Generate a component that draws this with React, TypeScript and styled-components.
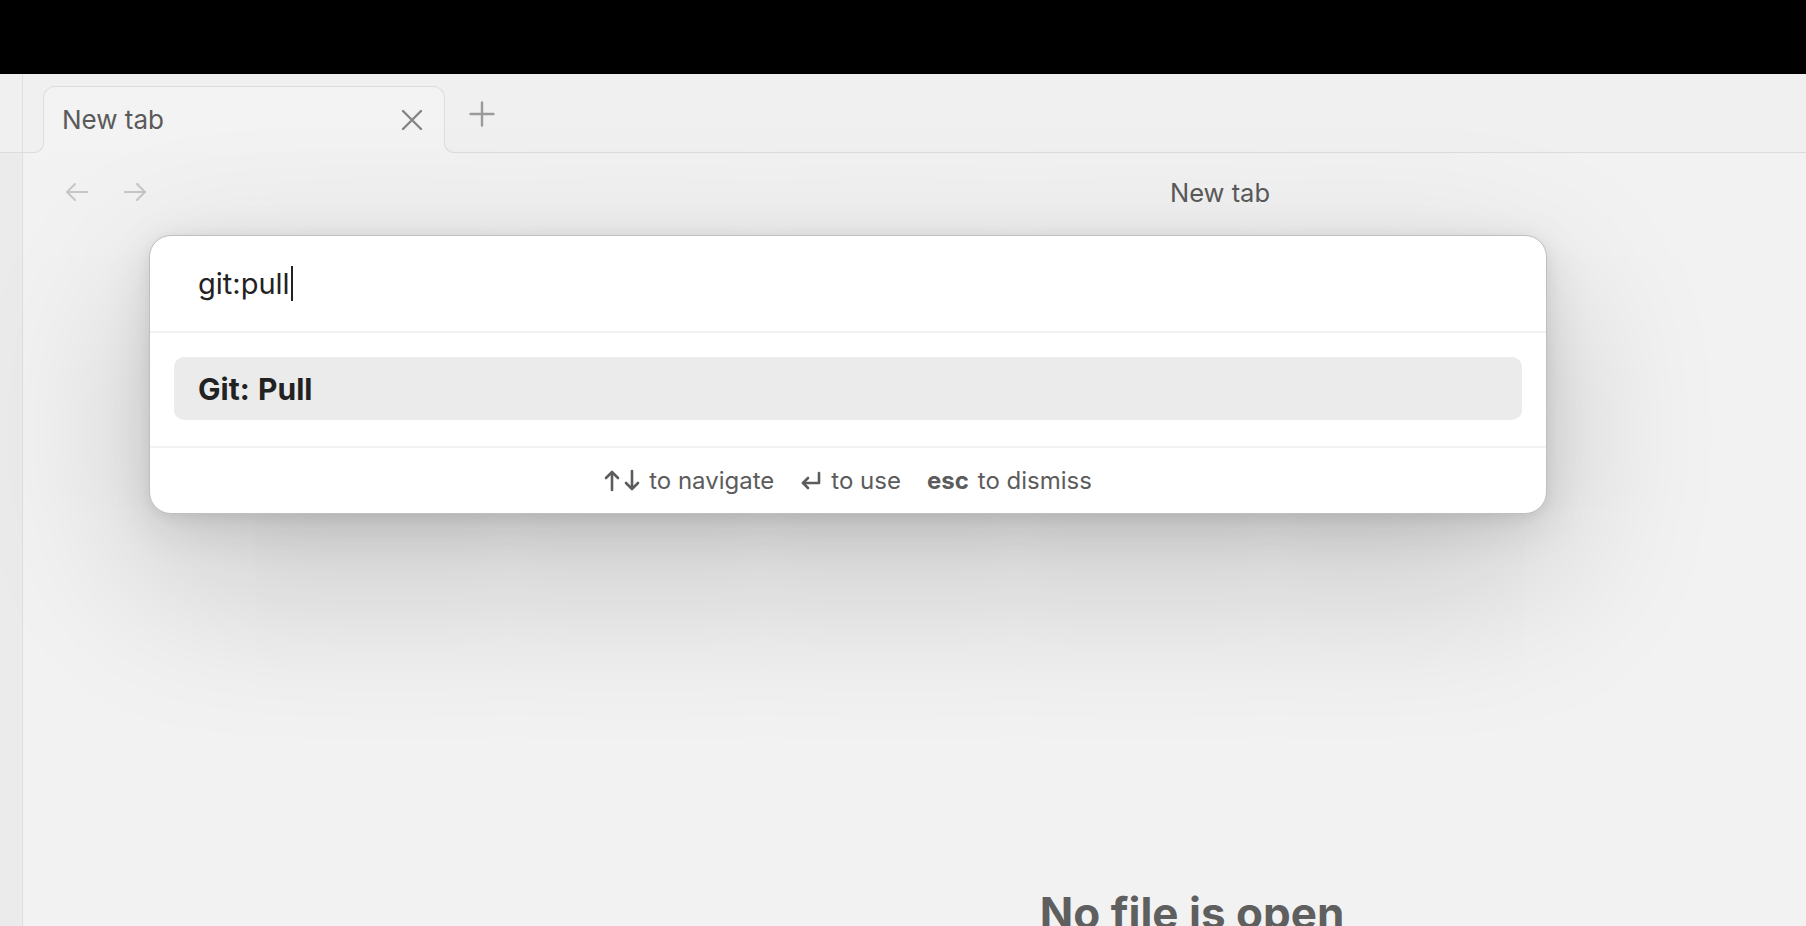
import React from "react";
import styled, { createGlobalStyle } from "styled-components";

const GlobalStyle = createGlobalStyle`
  html, body {
    margin: 0;
    padding: 0;
    background: #f2f2f2;
    font-family: Inter, "Noto Sans", "DejaVu Sans", sans-serif;
  }
  * { box-sizing: border-box; }
`;

const FLARE = 10;

let Frame = styled.div`
  position: relative;
  width: 1806px;
  height: 926px;
  overflow: hidden;
  display: flex;
  flex-direction: column;
  background: #f2f2f2;
`;

let TopBar = styled.div`
  height: 74px;
  background: #000;
  flex: none;
`;

let Workspace = styled.div`
  flex: 1;
  display: flex;
  min-height: 0;
`;

let Ribbon = styled.div`
  width: 23px;
  flex: none;
  display: flex;
  flex-direction: column;
  border-right: 1px solid #dedede;
`;

let RibbonHead = styled.div`
  height: 79px;
  background: #f0f0f0;
  border-bottom: 1px solid #dcdcdc;
`;

let RibbonBody = styled.div`
  flex: 1;
  background: #ebebeb;
`;

let Main = styled.div`
  flex: 1;
  display: flex;
  flex-direction: column;
  min-width: 0;
`;

let TabBar = styled.div`
  height: 79px;
  flex: none;
  display: flex;
  align-items: flex-start;
  padding: 12px 0 0 20px;
  background: #f0f0f0;
  border-bottom: 1px solid #dcdcdc;
`;

let Tab = styled.div`
  position: relative;
  width: 402px;
  height: 67px;
  margin-bottom: -1px;
  display: flex;
  align-items: center;
  justify-content: space-between;
  padding: 0 17px 0 19px;
  background: #f3f3f3;
  border-radius: 12px 12px 0 0;
`;

let TabOutline = styled.div`
  position: absolute;
  left: 0;
  right: 0;
  top: 0;
  bottom: ${FLARE}px;
  border: 1px solid #dcdcdc;
  border-bottom: none;
  border-radius: 12px 12px 0 0;
  pointer-events: none;
`;

let Flare = styled.div<{ $side: "left" | "right" }>`
  position: absolute;
  bottom: 0;
  width: ${FLARE}px;
  height: ${FLARE}px;
  border-bottom: 1px solid #dcdcdc;
  ${(p) =>
    p.$side === "left"
      ? `left: ${1 - FLARE}px;
         border-right: 1px solid #dcdcdc;
         border-bottom-right-radius: ${FLARE}px;
         box-shadow: 4px 4px 0 4px #f3f3f3;`
      : `right: ${1 - FLARE}px;
         border-left: 1px solid #dcdcdc;
         border-bottom-left-radius: ${FLARE}px;
         box-shadow: -4px 4px 0 4px #f3f3f3;`}
`;

let TabTitle = styled.span`
  font-size: 26px;
  color: #5a5a5a;
  white-space: nowrap;
`;

let IconButton = styled.div<{ $size: number }>`
  width: ${(p) => p.$size}px;
  height: ${(p) => p.$size}px;
  display: flex;
  align-items: center;
  justify-content: center;
  flex: none;
`;

let NewTabButton = styled(IconButton)`
  margin: 10px 0 0 19px;
`;

let ViewHeader = styled.div`
  height: 78px;
  flex: none;
  display: flex;
  align-items: center;
`;

let NavGroup = styled.div`
  width: 150px;
  flex: none;
  display: flex;
  align-items: center;
  gap: 34px;
  padding-left: 42px;
`;

let ViewTitle = styled.div`
  flex: 1;
  text-align: center;
  padding-left: 461px;
  font-size: 25.5px;
  color: #5a5a5a;
`;

let EmptyState = styled.div`
  flex: 1;
  display: flex;
  justify-content: center;
  padding: 656px 0 0 555px;
`;

let EmptyTitle = styled.div`
  font-size: 44px;
  font-weight: 700;
  line-height: 1.2;
  color: #5f5f5f;
  white-space: nowrap;
`;

let Overlay = styled.div`
  position: absolute;
  inset: 0;
  padding: 235px 0 0 149px;
  pointer-events: none;
`;

let Prompt = styled.div`
  width: 1398px;
  background: #fff;
  border: 1px solid #bfbfbf;
  border-radius: 22px;
  box-shadow: 0 3px 14px rgba(0, 0, 0, 0.07), 0 12px 47px rgba(0, 0, 0, 0.11),
    0 58px 173px rgba(0, 0, 0, 0.2);
  overflow: hidden;
`;

let InputRow = styled.div`
  height: 97px;
  display: flex;
  align-items: center;
  padding-left: 48px;
  border-bottom: 2px solid #f2f2f2;
  font-size: 29px;
  color: #222;
`;

let Caret = styled.span`
  display: inline-block;
  width: 2px;
  height: 35px;
  margin-left: 1px;
  background: #222;
`;

let Results = styled.div`
  padding: 24px 24px 26px 24px;
  border-bottom: 2px solid #f2f2f2;
`;

let Suggestion = styled.div<{ $active?: boolean }>`
  height: 63px;
  display: flex;
  align-items: center;
  padding-left: 24px;
  border-radius: 10px;
  background: ${(p) => (p.$active ? "#ebebeb" : "transparent")};
  font-size: 30px;
  color: #222;
`;

let Match = styled.b`
  font-weight: 700;
`;

let Instructions = styled.div`
  height: 65px;
  display: flex;
  align-items: center;
  justify-content: center;
  gap: 26px;
  font-size: 24px;
  color: #5c5c5c;
`;

let Instruction = styled.div`
  display: flex;
  align-items: center;
  gap: 9px;
`;

let Key = styled.span`
  font-weight: 700;
  color: #5c5c5c;
`;

const ArrowIcon = ({ dir }: { dir: "left" | "right" }) => (
  <svg width="24" height="20" viewBox="0 0 24 20" fill="none">
    <g
      stroke="#c6c6c6"
      strokeWidth="2"
      strokeLinecap="round"
      strokeLinejoin="round"
      transform={dir === "right" ? "translate(24 0) scale(-1 1)" : undefined}
    >
      <path d="M22 10H2" />
      <path d="M10 2L2 10L10 18" />
    </g>
  </svg>
);

const CloseIcon = () => (
  <svg width="22" height="22" viewBox="0 0 22 22" fill="none">
    <path d="M2 2L20 20M20 2L2 20" stroke="#858585" strokeWidth="2.4" strokeLinecap="round" />
  </svg>
);

const PlusIcon = () => (
  <svg width="26" height="26" viewBox="0 0 26 26" fill="none">
    <path d="M13 1.5V24.5M1.5 13H24.5" stroke="#9a9a9a" strokeWidth="2.4" strokeLinecap="round" />
  </svg>
);

const UpDownIcon = () => (
  <svg width="36" height="23" viewBox="0 0 36 23" fill="none">
    <g stroke="#5c5c5c" strokeWidth="2.6" strokeLinecap="round" strokeLinejoin="round">
      <path d="M8 21V3M2 9L8 3L14 9" />
      <path d="M28 2V20M22 14L28 20L34 14" />
    </g>
  </svg>
);

const EnterIcon = () => (
  <svg width="22" height="20" viewBox="0 0 22 20" fill="none">
    <g stroke="#5c5c5c" strokeWidth="2.6" strokeLinecap="round" strokeLinejoin="round">
      <path d="M19 2V12H3" />
      <path d="M8 7L3 12L8 17" />
    </g>
  </svg>
);

const App = () => {
  const instructions = [
    { icon: <UpDownIcon />, text: "to navigate" },
    { icon: <EnterIcon />, text: "to use" },
    { icon: <Key>esc</Key>, text: "to dismiss" },
  ];

  return (
    <>
      <GlobalStyle />
      <Frame>
        <TopBar />
        <Workspace>
          <Ribbon>
            <RibbonHead />
            <RibbonBody />
          </Ribbon>
          <Main>
            <TabBar>
              <Tab>
                <TabOutline />
                <Flare $side="left" />
                <Flare $side="right" />
                <TabTitle>New tab</TabTitle>
                <IconButton $size={32}>
                  <CloseIcon />
                </IconButton>
              </Tab>
              <NewTabButton $size={36}>
                <PlusIcon />
              </NewTabButton>
            </TabBar>
            <ViewHeader>
              <NavGroup>
                <ArrowIcon dir="left" />
                <ArrowIcon dir="right" />
              </NavGroup>
              <ViewTitle>New tab</ViewTitle>
            </ViewHeader>
            <EmptyState>
              <EmptyTitle>No file is open</EmptyTitle>
            </EmptyState>
          </Main>
        </Workspace>

        <Overlay>
          <Prompt>
            <InputRow>
              git:pull
              <Caret />
            </InputRow>
            <Results>
              <Suggestion $active>
                <Match>Git</Match>
                <Match>:</Match>&nbsp;<Match>Pull</Match>
              </Suggestion>
            </Results>
            <Instructions>
              {instructions.map((item, idx) => (
                <Instruction key={idx}>
                  {item.icon}
                  <span>{item.text}</span>
                </Instruction>
              ))}
            </Instructions>
          </Prompt>
        </Overlay>
      </Frame>
    </>
  );
};

export default App;
